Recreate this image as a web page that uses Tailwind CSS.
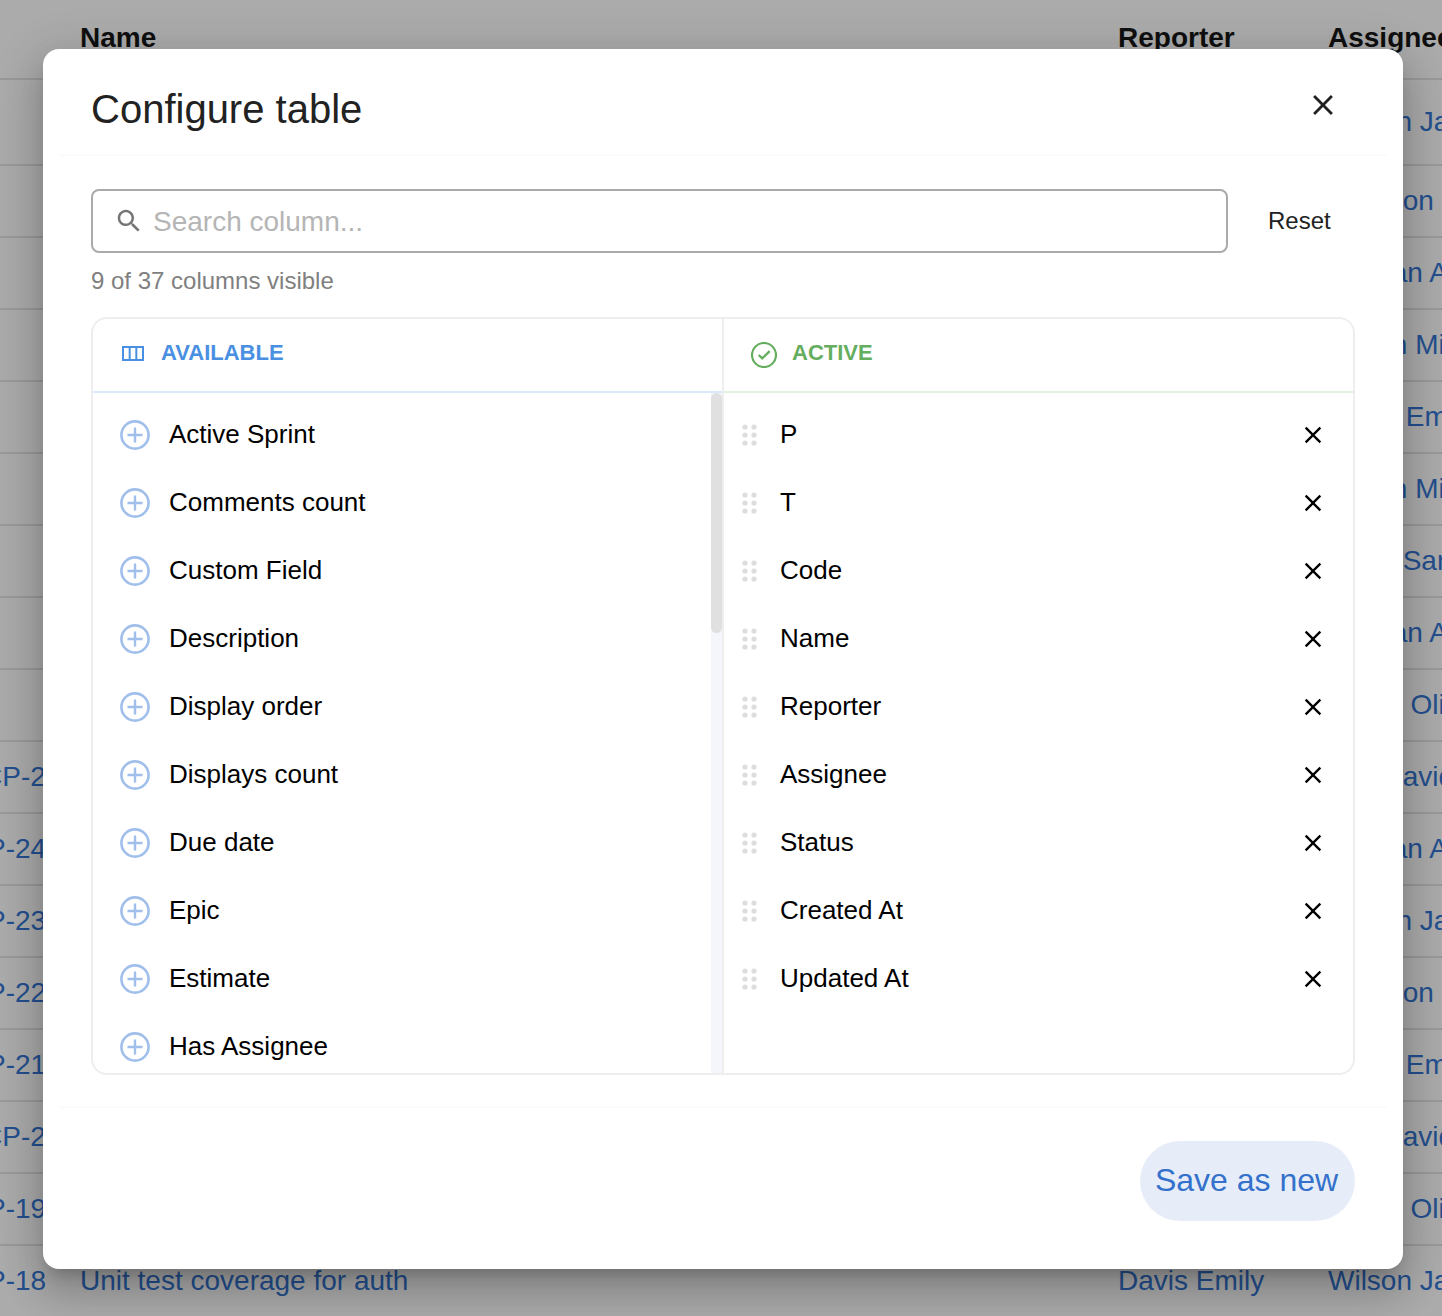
<!DOCTYPE html>
<html lang="en">
<head>
    <meta charset="UTF-8">
    <meta name="viewport" content="width=device-width, initial-scale=1.0">
    <title>Configure table</title>
    <script src="https://cdn.jsdelivr.net/npm/@tailwindcss/browser@4"></script>
</head>
<body class="relative w-[1442px] h-[1316px] overflow-hidden bg-white font-['Liberation_Sans',Arial,sans-serif] antialiased">
    <!-- table behind the dialog -->
    <div id="table" class="text-[28px] text-[#3577d4] whitespace-nowrap">
        <div class="flex items-center h-[80px] pb-[2px] border-b-2 border-[#e5e5e5] font-bold text-[#171717]">
            <div class="w-[80px] shrink-0"></div>
            <div class="w-[1038px] shrink-0">Name</div>
            <div class="w-[210px] shrink-0">Reporter</div>
            <div class="shrink-0">Assignee</div>
        </div>
    </div>

    <!-- scrim -->
    <div class="absolute inset-0 bg-black/[0.33]"></div>

    <!-- dialog -->
    <div class="absolute left-[43px] top-[49px] w-[1360px] h-[1220px] flex flex-col bg-white rounded-2xl shadow-[0_11px_15px_-7px_rgba(0,0,0,0.2),0_24px_38px_3px_rgba(0,0,0,0.14),0_9px_46px_8px_rgba(0,0,0,0.12)]">
        <div class="mx-4 h-[107px] shrink-0 flex justify-between border-b-2 border-[#fbfbfb]">
            <h2 class="pl-8 pt-[36px] text-[40px] leading-[48px] text-[#222]">Configure table</h2>
            <button class="mr-[47px] mt-[39px] h-[34px] text-[#222]">
                <svg viewBox="0 0 24 24" fill="currentColor" class="w-[34px] h-[34px]"><path d="M19 6.41 17.59 5 12 10.59 6.41 5 5 6.41 10.59 12 5 17.59 6.41 19 12 13.41 17.59 19 19 17.59 13.41 12z"/></svg>
            </button>
        </div>

        <div class="px-12 pt-[33px]">
            <div class="flex items-center">
                <div class="w-[1137px] h-16 flex items-center gap-[9px] pl-[21px] border-2 border-[#aaaaaa] rounded-lg">
                    <svg viewBox="0 0 24 24" fill="#757575" class="w-[30px] h-[30px] shrink-0"><path d="M15.5 14h-.79l-.28-.27C15.41 12.59 16 11.11 16 9.5 16 5.91 13.09 3 9.5 3S3 5.91 3 9.5 5.91 16 9.5 16c1.61 0 3.09-.59 4.23-1.57l.27.28v.79l5 4.99L20.49 19l-4.99-5zm-6 0C7.01 14 5 11.99 5 9.5S7.01 5 9.5 5 14 7.01 14 9.5 11.99 14 9.5 14z"/></svg>
                    <input class="flex-1 mt-[2px] text-[28px] outline-none placeholder:text-[#b5b5b5]" placeholder="Search column...">
                </div>
                <button class="ml-[40px] text-2xl text-[#222]">Reset</button>
            </div>
            <p class="mt-[14px] text-2xl leading-7 text-[#808080]">9 of 37 columns visible</p>

            <div class="mt-[22px] h-[758px] grid grid-cols-[631px_1fr] border-2 border-[#eeeeee] rounded-2xl overflow-hidden">
                <div class="relative flex flex-col border-r-2 border-[#eeeeee] min-h-0">
                    <div class="h-[74px] shrink-0 flex items-center gap-[17px] pl-[29px] pb-[6px] border-b-2 border-[#dbeafb]">
                        <svg viewBox="0 0 22 15" fill="none" stroke="#4a90e2" stroke-width="2" class="w-[22px] h-[15px] mt-[3px]"><path d="M1 1h20v13H1zM7.67 1v13M14.33 1v13"/></svg>
                        <span class="text-[22px] font-bold text-[#4a90e2]">AVAILABLE</span>
                    </div>
                    <div id="available" class="flex-1 pt-[7px] pr-[11px] overflow-hidden"></div>
                    <!-- scrollbar -->
                    <div class="absolute right-0 top-[74px] bottom-0 w-[11px] bg-[#f5f6fb]">
                        <div class="h-[240px] bg-[#e0e0e0] rounded-md"></div>
                    </div>
                </div>
                <div class="flex flex-col min-h-0">
                    <div class="h-[74px] shrink-0 flex items-center gap-[15px] pl-[27px] pb-[6px] border-b-2 border-[#e2f2e0]">
                        <svg viewBox="0 0 26 26" fill="none" stroke="#66ae5f" stroke-width="2.2" class="w-[26px] h-[26px] mt-[6px]">
                            <circle cx="13" cy="13" r="12"/>
                            <path d="M7.7 13l3.5 3.4L18.7 9.2" stroke-width="2.4"/>
                        </svg>
                        <span class="text-[22px] font-bold text-[#66ae5f]">ACTIVE</span>
                    </div>
                    <div id="active" class="flex-1 pt-[7px]"></div>
                </div>
            </div>
        </div>

        <div class="mx-4 mt-[31px] border-t-2 border-[#fbfbfb]"></div>
        <div class="flex justify-end px-12 pt-[33px]">
            <button class="w-[215px] h-20 pb-[2px] pr-[2px] rounded-[40px] bg-[#e7edf8] text-[32px] text-[#3371cc]">Save as new</button>
        </div>
    </div>

    <script>
        // code column is cut by the window edge, so each label gets a negative margin
        const rows = [
            ['', 'Wilson James'], ['', 'Johnson'], ['', 'Morgan Alex'], ['', 'Brown Michael'],
            ['', 'Davis Emily'], ['', 'Brown Michael'], ['', 'Perry Sarah'], ['', 'Morgan Alex'],
            ['', 'Jones Olivia'], ['CP-25', 'Lee David'], ['P-24', 'Morgan Alex'], ['P-23', 'Wilson James'],
            ['P-22', 'Johnson'], ['P-21', 'Davis Emily'], ['CP-20', 'Lee David'], ['P-19', 'Jones Olivia'],
            ['P-18', 'Wilson James', 'Unit test coverage for auth', 'Davis Emily'],
        ];
        const table = document.getElementById('table');
        rows.forEach((row, i) => {
            const height = i === 0 ? 'h-[86px]' : 'h-[72px]';
            const shift = row[0].startsWith('C') ? 'ml-[-18px]' : 'ml-[-13px]';
            table.insertAdjacentHTML('beforeend', `
                <div class="flex items-center ${height} border-b-2 border-[#e5e5e5]">
                    <div class="w-[80px] shrink-0 overflow-hidden"><span class="${shift}">${row[0]}</span></div>
                    <div class="w-[1038px] shrink-0">${row[2] || ''}</div>
                    <div class="w-[210px] shrink-0">${row[3] || ''}</div>
                    <div class="shrink-0">${row[1]}</div>
                </div>`);
        });

        const available = ['Active Sprint', 'Comments count', 'Custom Field', 'Description', 'Display order', 'Displays count', 'Due date', 'Epic', 'Estimate', 'Has Assignee', 'Labels'];
        document.getElementById('available').innerHTML = available.map(name => `
            <div class="h-[68px] flex items-center gap-[19px] pl-[27px] text-[26px] text-black">
                <svg viewBox="0 0 30 30" fill="none" stroke="#a1bfeb" class="w-[30px] h-[30px] shrink-0 mt-[2px]">
                    <circle cx="15" cy="15" r="13.6" stroke-width="2.6"/>
                    <path d="M15 7.5v15M7.5 15h15" stroke-width="2.4"/>
                </svg>
                <span class="whitespace-nowrap">${name}</span>
            </div>`).join('');

        const active = ['P', 'T', 'Code', 'Name', 'Reporter', 'Assignee', 'Status', 'Created At', 'Updated At'];
        document.getElementById('active').innerHTML = active.map(name => `
            <div class="h-[68px] flex items-center pl-[18px] pr-[26px] text-[26px] text-black">
                <svg viewBox="0 0 16 24" fill="#dddddd" class="w-4 h-6 shrink-0 mt-[2px]">
                    <circle cx="3" cy="4" r="2.6"/><circle cx="12" cy="4" r="2.6"/>
                    <circle cx="3" cy="12" r="2.6"/><circle cx="12" cy="12" r="2.6"/>
                    <circle cx="3" cy="20" r="2.6"/><circle cx="12" cy="20" r="2.6"/>
                </svg>
                <span class="flex-1 ml-[22px]">${name}</span>
                <svg viewBox="0 0 24 24" fill="#000000" class="w-7 h-7 shrink-0 mt-[2px]"><path d="M19 6.41 17.59 5 12 10.59 6.41 5 5 6.41 10.59 12 5 17.59 6.41 19 12 13.41 17.59 19 19 17.59 13.41 12z"/></svg>
            </div>`).join('');
    </script>
</body>
</html>
